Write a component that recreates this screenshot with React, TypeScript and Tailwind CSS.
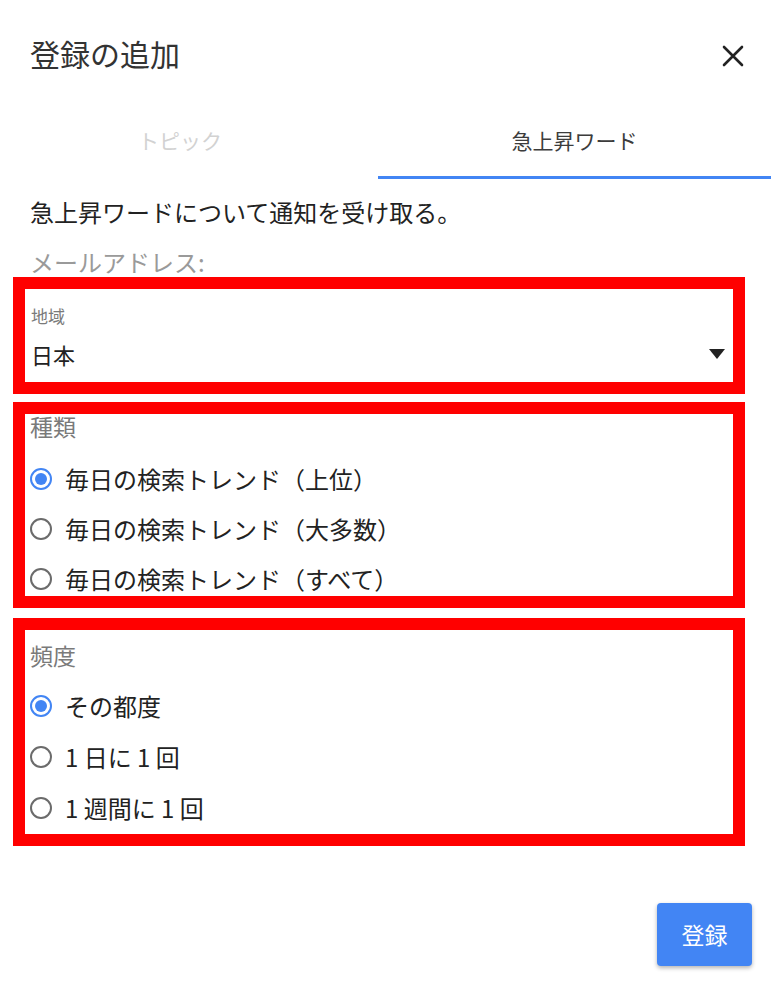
import React from "react";

const font = { fontFamily: '"Noto Sans CJK JP", "Noto Sans", sans-serif' };

function Radio({ checked, label }: { checked?: boolean; label: string }) {
  return (
    <div className="flex h-[32px] items-center">
      <span
        className={
          "flex h-[22px] w-[22px] items-center justify-center rounded-full border-[2px] " +
          (checked ? "border-[#4285f4]" : "border-[#6b6b6b]")
        }
      >
        {checked && <span className="h-[12px] w-[12px] rounded-full bg-[#4285f4]" />}
      </span>
      <span className="ml-[13px] text-[24px] leading-[32px] text-[#222]">{label}</span>
    </div>
  );
}

export default function App() {
  return (
    <div className="relative h-[989px] w-[771px] overflow-hidden bg-white" style={font}>
      {/* header */}
      <div className="mt-[33px] flex h-[40px] items-center justify-between pl-[30px] pr-[27px]">
        <span className="text-[30px] leading-[40px] text-[#333]">登録の追加</span>
        <svg width="22" height="22" viewBox="0 0 22 22" className="mt-[5px]">
          <path d="M2 2 L20 20 M20 2 L2 20" stroke="#222" strokeWidth="2.6" strokeLinecap="round" />
        </svg>
      </div>

      {/* tabs */}
      <div className="mt-[53px] flex">
        <div className="flex w-[378px] flex-col items-center">
          <span className="h-[28px] pr-[18px] text-[21px] leading-[28px] text-[#d2d2d2]">トピック</span>
          <div className="mt-[22px] h-[3px] w-full bg-transparent" />
        </div>
        <div className="flex flex-1 flex-col items-center">
          <span className="h-[28px] text-[21px] leading-[28px] text-[#3c3c3c]">急上昇ワード</span>
          <div className="mt-[22px] h-[3px] w-full bg-[#4285f4]" />
        </div>
      </div>

      {/* description */}
      <div className="mt-[18px] h-[30px] pl-[30px] text-[24px] leading-[30px] text-[#222]">
        急上昇ワードについて通知を受け取る。
      </div>
      <div className="mt-[20px] h-[30px] pl-[30px] text-[24px] leading-[30px] text-[#9a9a9a]">
        メールアドレス:
      </div>

      <div className="pl-[13px] pr-[26px]">
        {/* region */}
        <div className="h-[117px] border-[12px] border-[#ff0000] pl-[6px] pr-[8px]">
          <div className="mt-[17px] h-[20px] text-[17px] leading-[20px] text-[#7a7a7a]">地域</div>
          <div className="mt-[14px] flex h-[28px] items-center justify-between">
            <span className="text-[22px] leading-[28px] text-[#222]">日本</span>
            <svg width="16" height="10" viewBox="0 0 16 10">
              <path d="M0 0 L16 0 L8 10 Z" fill="#222" />
            </svg>
          </div>
        </div>

        {/* type */}
        <div className="mt-[8px] h-[206px] border-[12px] border-[#ff0000] pl-[5px]">
          <div className="h-[24px] text-[23px] leading-[24px] text-[#7a7a7a]">種類</div>
          <div className="mt-[25px] flex flex-col gap-[18px]">
            <Radio checked label="毎日の検索トレンド（上位）" />
            <Radio label="毎日の検索トレンド（大多数）" />
            <Radio label="毎日の検索トレンド（すべて）" />
          </div>
        </div>

        {/* frequency */}
        <div className="mt-[10px] h-[228px] border-[12px] border-[#ff0000] pl-[5px]">
          <div className="mt-[13px] h-[24px] text-[23px] leading-[24px] text-[#7a7a7a]">頻度</div>
          <div className="mt-[23px] flex flex-col gap-[19px]">
            <Radio checked label="その都度" />
            <Radio label="1 日に 1 回" />
            <Radio label="1 週間に 1 回" />
          </div>
        </div>
      </div>

      {/* button */}
      <div className="mt-[57px] flex justify-end pr-[19px]">
        <button className="flex h-[63px] w-[95px] items-center justify-center rounded-[4px] bg-[#4285f4] text-[23px] text-white shadow-[0_2px_4px_rgba(0,0,0,0.3)]">
          登録
        </button>
      </div>
    </div>
  );
}
